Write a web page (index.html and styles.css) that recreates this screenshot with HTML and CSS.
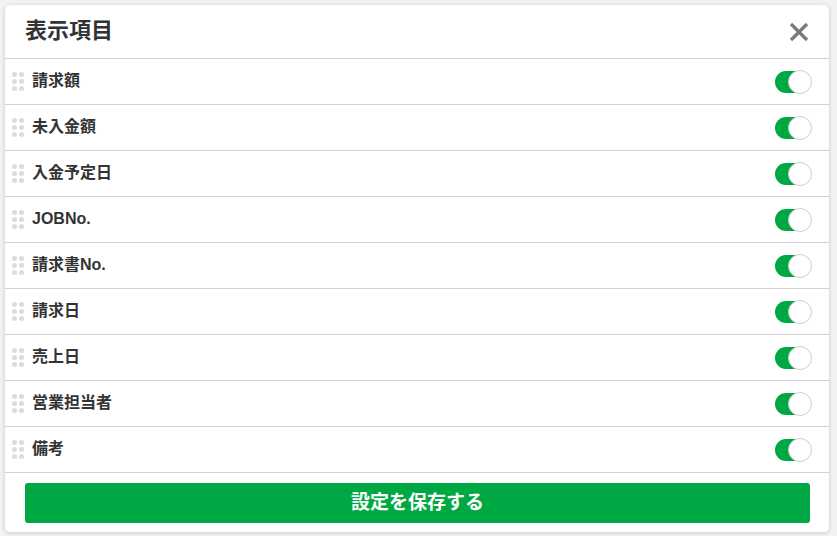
FILE: index.html
```html
<!DOCTYPE html>
<html lang="ja">
<head>
<meta charset="utf-8">
<title>表示項目</title>
<link rel="stylesheet" href="styles.css">
</head>
<body>
<div class="modal">
  <div class="modal-header">
    <h2 class="modal-title">表示項目</h2>
    <button class="close-btn" aria-label="閉じる">
      <svg width="20" height="20" viewBox="0 0 20 20"><path d="M2 2L18 18M18 2L2 18" stroke="#7a7a7a" stroke-width="3.2" stroke-linecap="butt"/></svg>
    </button>
  </div>
  <ul class="item-list">
    <li class="item"><span class="handle"><i></i><i></i><i></i><i></i><i></i><i></i></span><span class="label">請求額</span><span class="toggle"><span class="knob"></span></span></li>
    <li class="item"><span class="handle"><i></i><i></i><i></i><i></i><i></i><i></i></span><span class="label">未入金額</span><span class="toggle"><span class="knob"></span></span></li>
    <li class="item"><span class="handle"><i></i><i></i><i></i><i></i><i></i><i></i></span><span class="label">入金予定日</span><span class="toggle"><span class="knob"></span></span></li>
    <li class="item"><span class="handle"><i></i><i></i><i></i><i></i><i></i><i></i></span><span class="label">JOBNo.</span><span class="toggle"><span class="knob"></span></span></li>
    <li class="item"><span class="handle"><i></i><i></i><i></i><i></i><i></i><i></i></span><span class="label">請求書No.</span><span class="toggle"><span class="knob"></span></span></li>
    <li class="item"><span class="handle"><i></i><i></i><i></i><i></i><i></i><i></i></span><span class="label">請求日</span><span class="toggle"><span class="knob"></span></span></li>
    <li class="item"><span class="handle"><i></i><i></i><i></i><i></i><i></i><i></i></span><span class="label">売上日</span><span class="toggle"><span class="knob"></span></span></li>
    <li class="item"><span class="handle"><i></i><i></i><i></i><i></i><i></i><i></i></span><span class="label">営業担当者</span><span class="toggle"><span class="knob"></span></span></li>
    <li class="item"><span class="handle"><i></i><i></i><i></i><i></i><i></i><i></i></span><span class="label">備考</span><span class="toggle"><span class="knob"></span></span></li>
  </ul>
  <div class="modal-footer">
    <button class="save-btn">設定を保存する</button>
  </div>
</div>
</body>
</html>
```
FILE: styles.css
```css
* { box-sizing: border-box; }
html, body { margin: 0; padding: 0; }
body {
  width: 837px;
  height: 536px;
  padding: 5px 8px 4px 5px;
  background: #f3f3f3;
  font-family: "Liberation Sans", "Noto Sans CJK JP", sans-serif;
  color: #333;
  overflow: hidden;
}
.modal {
  width: 824px;
  height: 527px;
  background: #fff;
  border-radius: 5px;
  box-shadow: 0 1px 5px rgba(0,0,0,0.18);
  display: flex;
  flex-direction: column;
  overflow: hidden;
}
.modal-header {
  height: 54px;
  border-bottom: 1px solid #d2d2d2;
  display: flex;
  align-items: center;
  justify-content: space-between;
  padding: 0 20px 0 20px;
}
.modal-title {
  margin: 0;
  font-size: 22px;
  font-weight: bold;
  color: #333;
  line-height: 1;
  padding-bottom: 1px;
}
.close-btn {
  border: none;
  background: none;
  padding: 0;
  width: 20px;
  height: 20px;
  display: flex;
}
.item-list {
  list-style: none;
  margin: 0;
  padding: 0;
}
.item {
  height: 46px;
  border-bottom: 1px solid #d2d2d2;
  display: flex;
  align-items: center;
  padding: 0 18px 0 7px;
}
.handle {
  display: grid;
  grid-template-columns: 5px 5px;
  grid-auto-rows: 5px;
  gap: 2px;
  width: 12px;
  margin-right: 8px;
}
.handle i {
  display: block;
  width: 5px;
  height: 5px;
  border-radius: 50%;
  background: #dcdcdc;
}
.label {
  flex: 1;
  font-size: 16px;
  font-weight: bold;
  color: #333;
  line-height: 1;
  padding-bottom: 2px;
}
.toggle {
  position: relative;
  width: 36px;
  height: 22px;
  border-radius: 11px;
  background: #00a843;
}
.knob {
  position: absolute;
  right: -1px;
  top: -1px;
  width: 24px;
  height: 24px;
  border-radius: 50%;
  background: #fff;
  border: 1px solid #cfcfcf;
}
.modal-footer {
  flex: 1;
  padding: 10px 19px 0 20px;
}
.save-btn {
  width: 100%;
  height: 40px;
  border: none;
  border-radius: 3px;
  background: #00a843;
  color: #fff;
  font-family: "Liberation Sans", "Noto Sans CJK JP", sans-serif;
  font-size: 19px;
  font-weight: bold;
  line-height: 1;
  padding-bottom: 2px;
}
```
